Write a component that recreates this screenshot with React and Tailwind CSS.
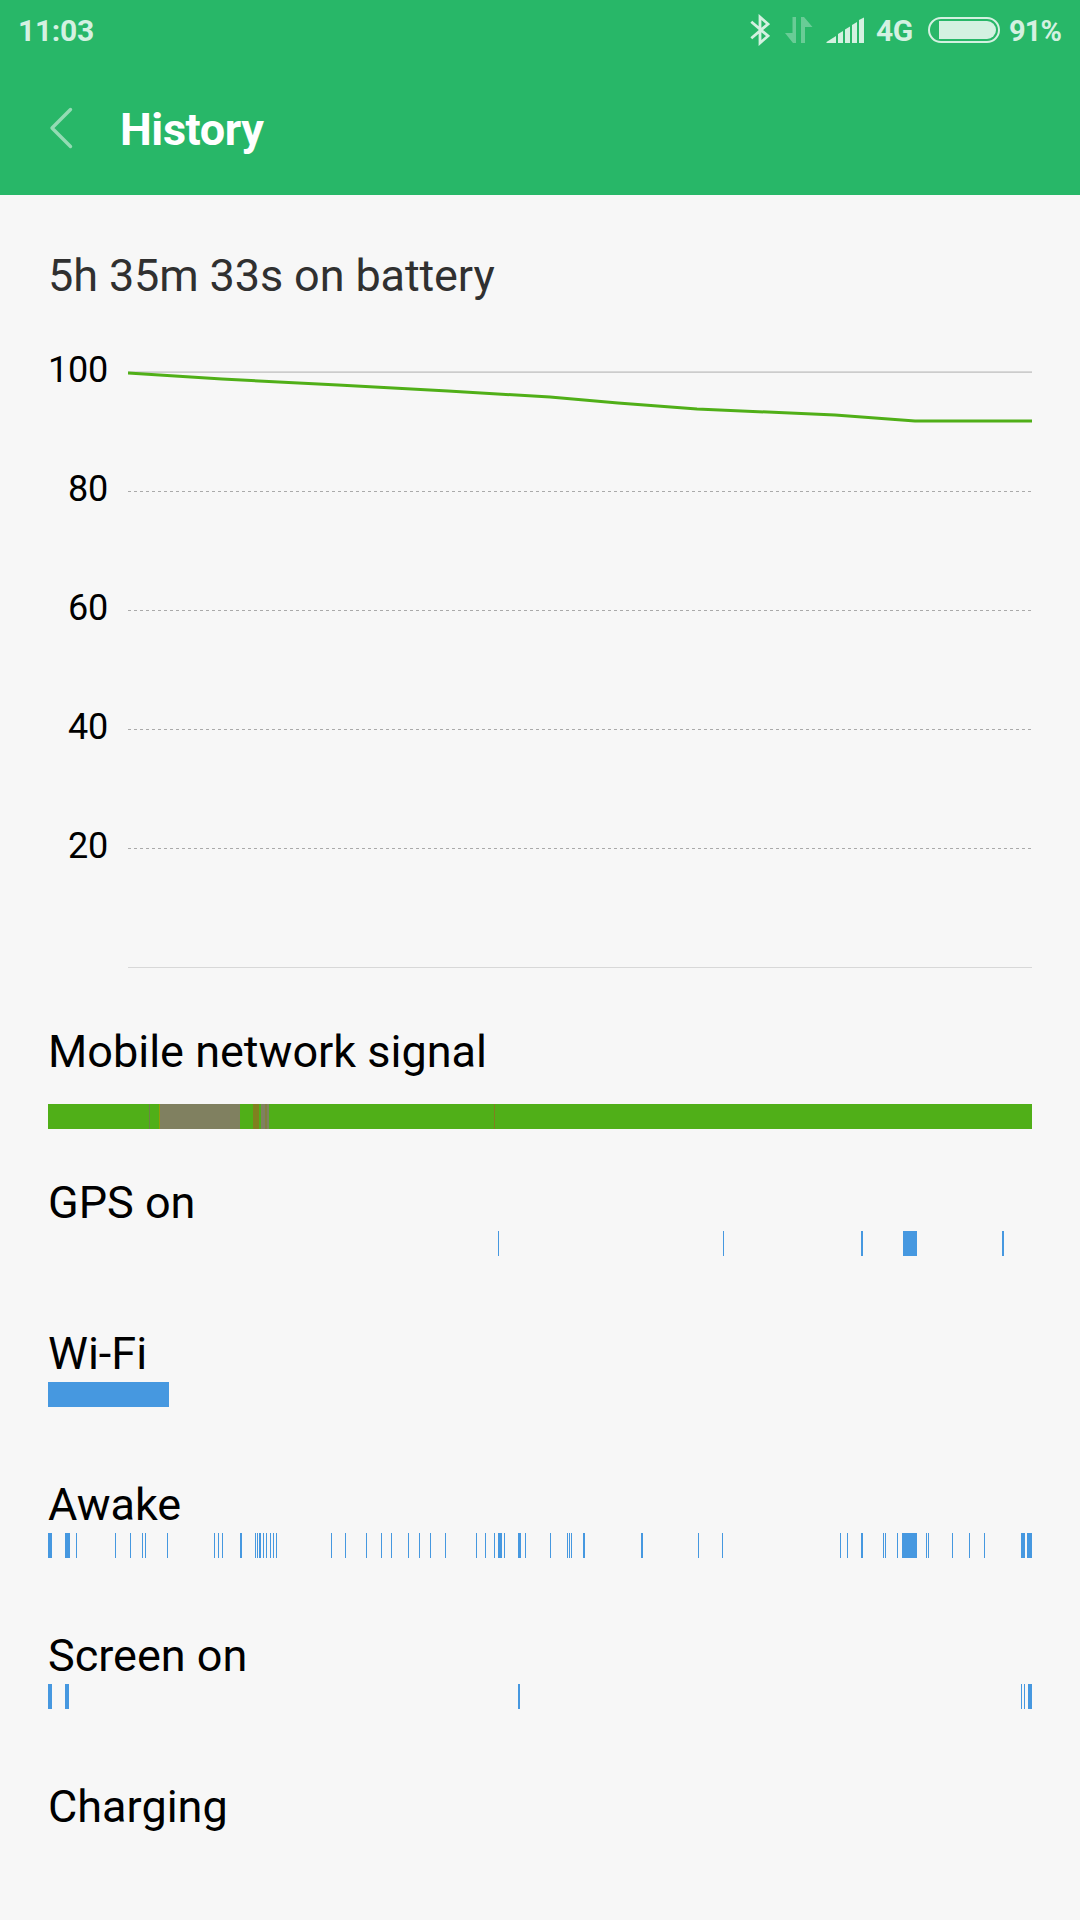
import React from 'react';

const CHART_START = 48;

// [x, width] in screen pixels
const gps = [[498, 1], [723, 1], [861, 2], [903, 14], [1002, 2]];
const wifi = [[48, 121]];
const awake = [
  [48, 4], [65, 5], [76, 1], [115, 1], [130, 1], [142, 1], [145, 1], [167, 1],
  [214, 1], [218, 1], [222, 1], [240, 2], [255, 1], [257, 1], [259, 2], [263, 1],
  [266, 1], [270, 1], [273, 1], [276, 1], [331, 1], [345, 1], [366, 1], [381, 1],
  [391, 1], [408, 1], [419, 1], [430, 1], [445, 1], [476, 1], [485, 1], [494, 1],
  [498, 4], [504, 1], [518, 3], [525, 1], [550, 1], [567, 1], [569, 1], [571, 1],
  [583, 2], [641, 2], [698, 1], [722, 1], [840, 1], [847, 1], [861, 2], [883, 1],
  [885, 1], [897, 1], [902, 15], [926, 1], [928, 1], [952, 1], [969, 1], [984, 1],
  [1021, 4], [1027, 5],
];
const screenOn = [[48, 4], [65, 4], [518, 2], [1021, 1], [1024, 1], [1028, 4]];

// [x, width, color]
const signal = [
  [48, 984, '#50af18'],
  [149, 1, '#6c8346'],
  [159, 1, '#929c0c'],
  [160, 80, '#808060'],
  [253, 6, '#80801f'],
  [261, 8, '#808060'],
  [265, 2, '#808040'],
  [494, 1, '#80801f'],
];

const rows = [
  { label: 'Mobile network signal', segments: signal, offset: 'mt-[25px]' },
  { label: 'GPS on', segments: gps },
  { label: 'Wi-Fi', segments: wifi },
  { label: 'Awake', segments: awake },
  { label: 'Screen on', segments: screenOn },
  { label: 'Charging', segments: [] },
];

const StatusBar = () => (
  <div className="flex h-[60px] items-center pr-[18px] pl-[18px] text-[30px] leading-none font-bold text-[#d4f1e1]">
    <span className="pt-[2px] tracking-[-0.3px]">11:03</span>
    <svg className="ml-auto" width="20" height="32" viewBox="0 0 20 32" fill="none" stroke="currentColor" strokeWidth="2.8">
      <path d="M1.3 7.7 L18 22 L10 29 V3 L18 10 L1.3 24.3" />
    </svg>
    <svg className="ml-[15px] opacity-30" width="28" height="26" viewBox="0 0 28 26" fill="white">
      <path d="M7.5 0 H11 V26 H8 L0 16 H7.5 Z" />
      <path d="M16 26 V0 H19 L27.5 10 H20 V26 Z" />
    </svg>
    <svg className="ml-[13px]" width="38" height="26" viewBox="0 0 38 26" fill="currentColor">
      <path d="M0.5 26 V25 L10 19 V26 Z" />
      <path d="M12 26 V17 L17 14 V26 Z" />
      <path d="M19 26 V12.5 L24 9.5 V26 Z" />
      <path d="M26 26 V8 L31 5 V26 Z" />
      <path d="M33 26 V3 L38 0.5 V26 Z" />
    </svg>
    <span className="ml-3 w-[37px] pt-[2px] tracking-[-0.4px]">4G</span>
    <svg className="ml-[15px]" width="72" height="26" viewBox="0 0 72 26" fill="none">
      <rect x="1" y="1" width="70" height="24" rx="12" stroke="currentColor" strokeWidth="2" />
      <path d="M11 4 H59 A9 9 0 0 1 59 22 H11 Z" fill="currentColor" />
    </svg>
    <span className="ml-[9px] w-[53px] pt-[2px] text-[29px] tracking-[-0.9px] whitespace-nowrap">91%</span>
  </div>
);

const Header = () => (
  <header className="h-[195px] bg-[#28b768]">
    <StatusBar />
    <div className="flex h-[135px] items-center pl-[49px]">
      <svg width="24" height="42" viewBox="0 0 24 42" fill="none" stroke="white" strokeOpacity="0.5" strokeWidth="3.4" strokeLinecap="round" strokeLinejoin="round">
        <path d="M21.5 2.5 L3 21 L21.5 39.5" />
      </svg>
      <h1 className="ml-[47px] pt-[5px] text-[45px] font-bold tracking-[-0.4px] text-white">History</h1>
    </div>
  </header>
);

const BatteryChart = () => (
  <div className="mt-[45px] flex">
    <div className="flex w-[60px] flex-col text-right text-[36px] leading-[44px] tracking-[-0.2px] text-black">
      {[100, 80, 60, 40, 20].map((level) => (
        <span key={level} className="h-[119px]">{level}</span>
      ))}
    </div>
    <svg className="mt-[18px] ml-5" width="904" height="604" viewBox="0 0 904 604" fill="none">
      <rect y="5" width="904" height="1" fill="#d8d8d8" />
      <rect y="6" width="904" height="1" fill="#cccccc" />
      {[125, 244, 363, 482].map((y) => (
        <path key={y} d={`M0 ${y + 0.5} H904`} stroke="#aaaaaa" strokeDasharray="3 3" />
      ))}
      <rect y="601" width="904" height="1" fill="#d8d8d8" />
      <path
        d="M0 7 L94 13 L210 19 L320 25 L422 31 L490 37 L569 43 L707 49 L787 55 H904"
        stroke="#50af18"
        strokeWidth="3"
      />
    </svg>
  </div>
);

const HistoryRow = ({ label, segments, offset = 'mt-px' }) => (
  <div className="h-[151px]">
    <div className="text-[45px] leading-[54px] text-black">{label}</div>
    <svg className={offset} width="984" height="25" shapeRendering="crispEdges">
      {segments.map(([x, width, color]) => (
        <rect key={x} x={x - CHART_START} width={width} height="25" fill={color || '#4698e0'} />
      ))}
    </svg>
  </div>
);

const App = () => {
  return (
    <div className="h-[1920px] w-[1080px] overflow-hidden bg-[#f7f7f7] font-['Roboto',sans-serif]">
      <Header />
      <main className="px-12 pt-[54px]">
        <h2 className="text-[45px] leading-[54px] tracking-[-0.12px] text-[#303030]">5h 35m 33s on battery</h2>
        <BatteryChart />
        <section className="mt-[55px]">
          {rows.map((row) => (
            <HistoryRow key={row.label} {...row} />
          ))}
        </section>
      </main>
    </div>
  );
};

export default App;
